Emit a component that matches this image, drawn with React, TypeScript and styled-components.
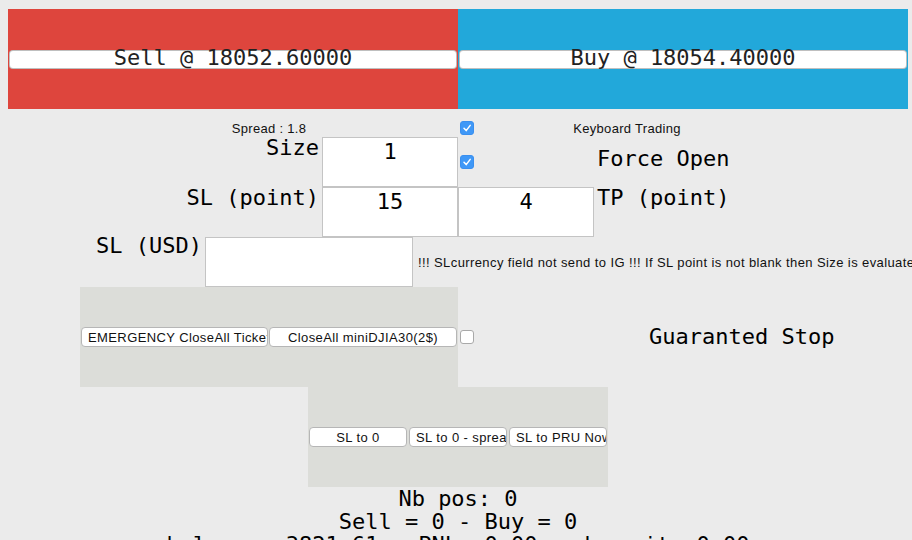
import styled, { createGlobalStyle } from "styled-components";

const MONO = `"DejaVu Sans Mono", "Liberation Mono", monospace`;

const GlobalStyle = createGlobalStyle`
  html, body {
    overflow: hidden;
  }
  body {
    margin: 9px 0 0 8px;
    background: #ebebeb;
    font-family: "Liberation Sans", Arial, sans-serif;
    color: #000;
  }
`;

const Page = styled.div`
  width: 900px;
`;

const Header = styled.div`
  display: flex;
  height: 100px;
`;

const Side = styled.div<{ $bg: string }>`
  flex: 0 0 450px;
  box-sizing: border-box;
  display: flex;
  align-items: center;
  padding: 0 1px;
  background: ${(p) => p.$bg};
`;

const TradeButton = styled.button`
  flex: 1;
  box-sizing: border-box;
  height: 19px;
  padding: 0 0 4px;
  border: 1px solid rgba(0, 0, 0, 0.25);
  border-radius: 4px;
  background: #fff;
  color: #222;
  font: 22px/13px ${MONO};
  cursor: pointer;
`;

const Form = styled.div`
  display: grid;
  grid-template-columns: 72px 125px 117px 136px 18px 118px 184px 130px;
  grid-template-rows: 18px 50px 50px 50px 100px;
  margin-top: 10px;
`;

const Hint = styled.span<{ $col: string; $row: number }>`
  grid-column: ${(p) => p.$col};
  grid-row: ${(p) => p.$row};
  justify-self: center;
  align-self: center;
  font-size: 13px;
  letter-spacing: 0.3px;
  color: #111;
  white-space: nowrap;
`;

const Label = styled.span<{ $col: string; $row: number; $end?: boolean; $top?: number }>`
  grid-column: ${(p) => p.$col};
  grid-row: ${(p) => p.$row};
  justify-self: ${(p) => (p.$end ? "end" : "start")};
  align-self: start;
  margin-top: ${(p) => p.$top ?? 0}px;
  padding: ${(p) => (p.$end ? "0 3px 0 0" : "0 0 0 3px")};
  font: 22px/22px ${MONO};
  white-space: nowrap;
`;

const Field = styled.input<{ $col: string; $row: number; $width?: number }>`
  grid-column: ${(p) => p.$col};
  grid-row: ${(p) => p.$row};
  box-sizing: border-box;
  width: ${(p) => (p.$width ? `${p.$width}px` : "100%")};
  height: 50px;
  margin: 0;
  padding: 0 0 22px;
  border: 1px solid #c4c4c4;
  background: #fff;
  font: 22px ${MONO};
  text-align: center;
  color: #000;
  outline: none;
`;

const Tick = styled.span<{ $row: number; $on?: boolean }>`
  grid-column: 5;
  grid-row: ${(p) => p.$row};
  align-self: center;
  margin-left: 2px;
  box-sizing: border-box;
  width: 14px;
  height: 14px;
  display: flex;
  align-items: center;
  justify-content: center;
  border-radius: 3px;
  border: 1px solid ${(p) => (p.$on ? "#3a8fef" : "#a9a9a9")};
  background: ${(p) => (p.$on ? "#3f98f7" : "#fff")};
`;

const UsdCell = styled.div`
  grid-column: 3 / -1;
  grid-row: 4;
  display: flex;
  align-items: center;
  gap: 5px;
`;

const Warning = styled.span`
  font-size: 13px;
  letter-spacing: 0.4px;
  color: #111;
  white-space: nowrap;
`;

const Panel = styled.div<{ $width?: number }>`
  display: flex;
  align-items: center;
  gap: ${(p) => (p.$width ? 2 : 1)}px;
  box-sizing: border-box;
  height: 100px;
  padding-left: 1px;
  background: #dcddd9;
`;

const ClosePanel = styled(Panel)`
  grid-column: 2 / 5;
  grid-row: 5;
`;

const StopPanel = styled(Panel)`
  width: 300px;
  margin: 0 auto;
`;

const SmallButton = styled.button<{ $w: number }>`
  box-sizing: border-box;
  width: ${(p) => p.$w}px;
  height: 20px;
  padding: 0 6px;
  border: 1px solid #b6b6b6;
  border-radius: 4px;
  background: #fff;
  color: #111;
  font: 13px "Liberation Sans", Arial, sans-serif;
  letter-spacing: 0.4px;
  text-align: center;
  white-space: nowrap;
  overflow: hidden;
  cursor: pointer;
`;

const Guarantee = styled.span`
  grid-column: 7 / -1;
  grid-row: 5;
  align-self: center;
  margin-left: 55px;
  font: 22px/22px ${MONO};
  white-space: nowrap;
`;

const Summary = styled.div`
  font: 22px/23px ${MONO};
  text-align: center;
  white-space: nowrap;
`;

function CheckMark() {
  return (
    <svg width="10" height="10" viewBox="0 0 10 10">
      <path d="M2 5.2 L4.2 7.6 L8.2 2.4" fill="none" stroke="#fff" strokeWidth="1.5" strokeLinecap="round" strokeLinejoin="round" />
    </svg>
  );
}

export default function App() {
  return (
    <Page>
      <GlobalStyle />
      <Header>
        <Side $bg="#de453d">
          <TradeButton>Sell @ 18052.60000</TradeButton>
        </Side>
        <Side $bg="#22a8da">
          <TradeButton>Buy @ 18054.40000</TradeButton>
        </Side>
      </Header>

      <Form>
        <Hint $col="2 / 5" $row={1}>Spread : 1.8</Hint>
        <Tick $row={1} $on>
          <CheckMark />
        </Tick>
        <Hint $col="6 / 8" $row={1}>Keyboard Trading</Hint>

        <Label $col="1 / 4" $row={2} $end>Size</Label>
        <Field $col="4" $row={2} defaultValue="1" />
        <Tick $row={2} $on>
          <CheckMark />
        </Tick>
        <Label $col="7 / -1" $row={2} $top={11}>Force Open</Label>

        <Label $col="1 / 4" $row={3} $end>SL (point)</Label>
        <Field $col="4" $row={3} defaultValue="15" />
        <Field $col="5 / 7" $row={3} defaultValue="4" />
        <Label $col="7 / -1" $row={3}>TP (point)</Label>

        <Label $col="1 / 3" $row={4} $end $top={-2}>SL (USD)</Label>
        <UsdCell>
          <Field $col="auto" $row={4} $width={208} defaultValue="" />
          <Warning>!!! SLcurrency field not send to IG !!! If SL point is not blank then Size is evaluated</Warning>
        </UsdCell>

        <ClosePanel>
          <SmallButton $w={187}>EMERGENCY CloseAll Tickets</SmallButton>
          <SmallButton $w={188}>CloseAll miniDJIA30(2$)</SmallButton>
        </ClosePanel>
        <Tick $row={5} />
        <Guarantee>Guaranted Stop</Guarantee>
      </Form>

      <StopPanel $width={300}>
        <SmallButton $w={98}>SL to 0</SmallButton>
        <SmallButton $w={98}>SL to 0 - spread</SmallButton>
        <SmallButton $w={98}>SL to PRU Now</SmallButton>
      </StopPanel>

      <Summary>Nb pos: 0</Summary>
      <Summary>Sell = 0 - Buy = 0</Summary>
      <Summary>balance: 3821.61 - PNL: 0.00 - deposit: 0.00</Summary>
    </Page>
  );
}
